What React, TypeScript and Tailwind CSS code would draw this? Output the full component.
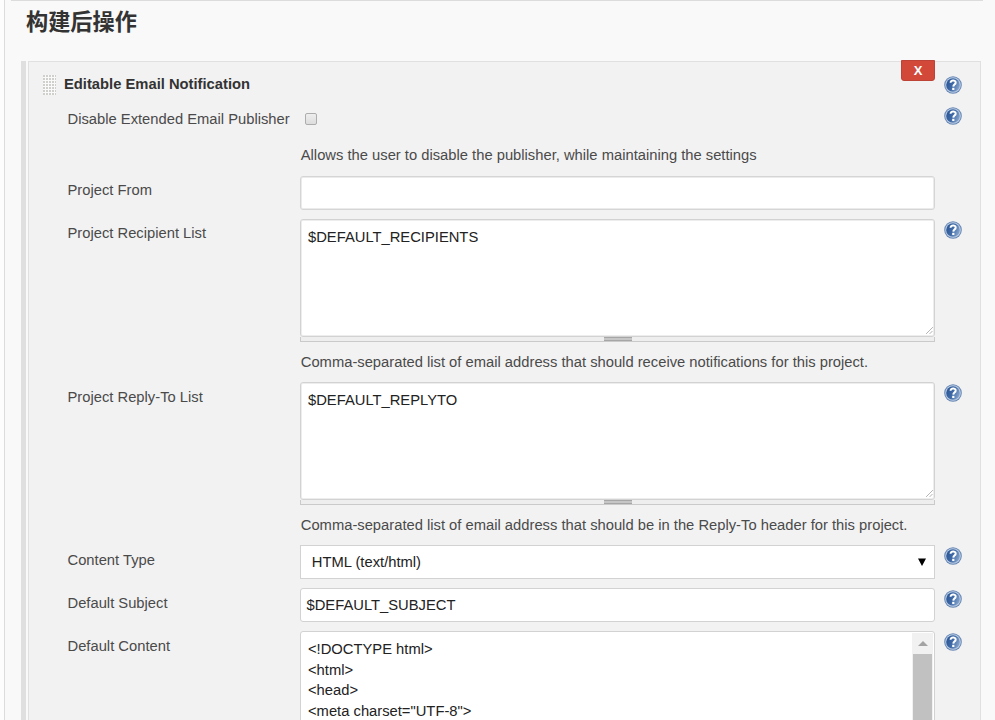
import type { ReactNode } from "react";

function HelpIcon() {
  return (
    <svg className="block h-[18px] w-[18px]" viewBox="0 0 18 18" role="img" aria-label="Help">
      <defs>
        <linearGradient id="helpFill" x1="0" y1="0.2" x2="1" y2="0.6">
          <stop offset="0" stopColor="#2a5596" />
          <stop offset="0.5" stopColor="#3f6aa6" />
          <stop offset="1" stopColor="#86a4cc" />
        </linearGradient>
      </defs>
      <circle cx="9" cy="9" r="8.8" fill="#6787b5" />
      <circle cx="9" cy="9" r="7.8" fill="#bccde3" />
      <circle cx="9" cy="9" r="6.8" fill="url(#helpFill)" />
      <path d="M6.6 6.8C6.4 3.8 11.8 3.6 11.7 6.6C11.6 8.6 9.4 8.6 9.3 10.6" fill="none" stroke="#fff" strokeWidth="2" />
      <rect x="8.2" y="11.8" width="2.2" height="2.2" fill="#fff" />
    </svg>
  );
}

function Row({ label, height, labelTop = "pt-[5px]", help = true, children }: { label: string; height: string; labelTop?: string; help?: boolean; children: ReactNode }) {
  return (
    <div className={`flex shrink-0 items-start pl-[38.5px] ${height}`}>
      <div className={`w-[232.5px] shrink-0 leading-[20px] whitespace-nowrap ${labelTop}`}>{label}</div>
      <div className="w-[635px] shrink-0">{children}</div>
      {help && <div className="ml-[9px] pt-[2px]"><HelpIcon /></div>}
    </div>
  );
}

function ResizableText({ value }: { value: string }) {
  return (
    <div className="h-[123px]">
      <div className="relative h-[118px] rounded-[3px] border border-[#d2d2d2] bg-white px-[7px] pt-[7px] leading-[20px] text-[#222] shadow-[inset_0_0_0_1px_#ededed]">
        {value}
        <svg className="absolute right-[1px] bottom-[2px] h-[7px] w-[7px]" viewBox="0 0 8 8" stroke="#777" strokeWidth="1" strokeDasharray="1 .5">
          <path d="M0.5 7.5 7.5 0.5M4.5 7.5 7.5 4.5" />
        </svg>
      </div>
      <div className="flex h-[5px] justify-center border-x border-b border-[#cacaca] bg-[#eee]">
        <div className="h-[4px] w-[28px] border-y border-[#a6a6a6] bg-[#c6c6c6]" />
      </div>
    </div>
  );
}

const LINES = ["<!DOCTYPE html>", "<html>", "<head>", '<meta charset="UTF-8">'];

export default function App() {
  return (
    <div className="flex h-[720px] w-[995px] overflow-hidden bg-[#fdfdfd] font-['Liberation_Sans',Arial,sans-serif] text-[14.75px] text-[#4a4a4a]">
      <div className="ml-[4px] flex flex-1 flex-col border-l border-[#dcdcdc] bg-[#f9f9f9]">
        <div className="mr-[12px] ml-[6px] h-px shrink-0 bg-[#dcdcdc]" />
        <h1 className="h-[60px] shrink-0 pt-[6px] pl-[21px] font-['Liberation_Sans','Noto_Sans_CJK_SC',sans-serif] text-[22.2px] leading-[32px] font-bold text-[#333]">构建后操作</h1>
        <div className="ml-[16px] flex h-[659px] w-[960px] shrink-0 border-l-[5px] border-[#dfdfdf]">
          <div className="ml-[2px] flex flex-1 flex-col border-t border-r border-l border-[#e0e0e0] bg-[#f2f2f2]">
            <div className="flex h-[43px] shrink-0 items-start pl-[14px]">
              <svg className="mt-[13px] h-[20px] w-[13px] shrink-0" viewBox="0 0 13 20">
                <defs>
                  <pattern id="grip" width="3" height="3" patternUnits="userSpaceOnUse">
                    <rect width="3" height="3" fill="#fafafa" />
                    <rect width="2" height="2" fill="#cfcfcb" />
                  </pattern>
                </defs>
                <rect width="13" height="20" fill="url(#grip)" />
              </svg>
              <div className="w-[846px] shrink-0 pt-[12px] pl-[8px] leading-[20px] font-bold text-[#333]">Editable Email Notification</div>
              <button className="-mt-[2px] -ml-px h-[21px] w-[34px] shrink-0 rounded-b-[3px] border border-[#bc4335] bg-[#d24939] text-[13px] leading-[19px] font-bold text-white">X</button>
              <div className="ml-[9px] shrink-0 pt-[14px]"><HelpIcon /></div>
            </div>
            <Row label="Disable Extended Email Publisher" height="h-[71px]" labelTop="pt-[4px]">
              <div className="flex h-[40px] pt-[8px] pl-[5px]">
                <div className="h-[12px] w-[12px] rounded-[2px] border border-[#adadad] bg-gradient-to-b from-[#eee] to-[#ddd]" />
              </div>
              <div className="pl-[0.75px] leading-[20px]">Allows the user to disable the publisher, while maintaining the settings</div>
            </Row>
            <Row label="Project From" height="h-[43px]" labelTop="pt-[4px]" help={false}>
              <div className="h-[34px] rounded-[3px] border border-[#d5d5d5] bg-white shadow-[inset_0_0_0_1px_#ebebeb]" />
            </Row>
            <Row label="Project Recipient List" height="h-[163px]" labelTop="pt-[4px]">
              <ResizableText value="$DEFAULT_RECIPIENTS" />
              <div className="pt-[10px] pl-[0.75px] leading-[20px]">Comma-separated list of email address that should receive notifications for this project.</div>
            </Row>
            <Row label="Project Reply-To List" height="h-[163px]">
              <ResizableText value="$DEFAULT_REPLYTO" />
              <div className="pt-[10px] pl-[0.75px] leading-[20px]">Comma-separated list of email address that should be in the Reply-To header for this project.</div>
            </Row>
            <Row label="Content Type" height="h-[43px]">
              <div className="flex h-[34px] items-center justify-between border border-[#d2d2d2] bg-white pr-[8px] pl-[10.75px] text-[#222]">
                <span>HTML (text/html)</span>
                <svg className="h-[8px] w-[8px]" viewBox="0 0 8 8"><path d="M0 0.5H8L4 8Z" fill="#000" /></svg>
              </div>
            </Row>
            <Row label="Default Subject" height="h-[43px]">
              <div className="flex h-[34px] items-center rounded-[3px] border border-[#d2d2d2] bg-white pl-[5.5px] text-[#222]">$DEFAULT_SUBJECT</div>
            </Row>
            <Row label="Default Content" height="h-[89px]">
              <div className="flex h-[110px] justify-between rounded-[3px] border border-[#d2d2d2] bg-white pt-px pr-px text-[#222]">
                <div className="pt-[6px] pl-[7px] leading-[20.6px]">
                  {LINES.map((line) => <div key={line}>{line}</div>)}
                </div>
                <div className="flex w-[21px] flex-col items-center bg-[#f1f1f1]">
                  <svg className="mt-[8px] mb-[8px] h-[5px] w-[10px] shrink-0" viewBox="0 0 10 5"><path d="M0 5 5 0 10 5Z" fill="#a3a3a3" /></svg>
                  <div className="w-[19px] flex-1 bg-[#c1c1c1]" />
                </div>
              </div>
            </Row>
          </div>
        </div>
      </div>
    </div>
  );
}
